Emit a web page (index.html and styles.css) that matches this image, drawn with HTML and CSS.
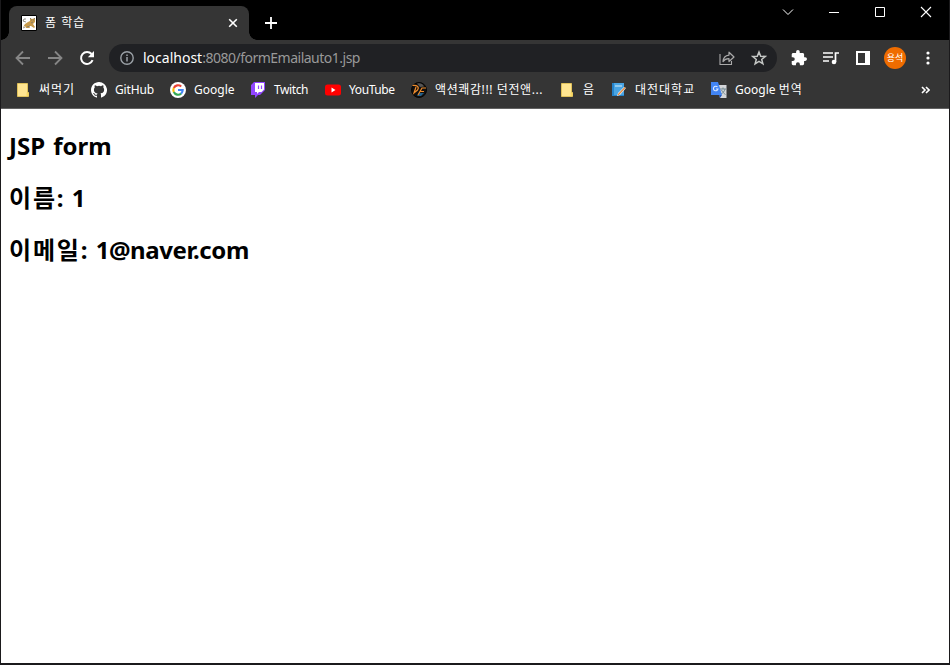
FILE: index.html
```html
<!DOCTYPE html>
<html lang="ko">
<head>
<meta charset="utf-8">
<title>폼 학습</title>
<link rel="stylesheet" href="styles.css">
</head>
<body>
<div class="window">
  <header class="tabstrip">
    <div class="tab">
      <svg class="favicon" width="16" height="16" viewBox="0 0 16 16"><path fill="#fff" stroke="#000" d="M.5.5h15v15H.5z"/><path d="M2 12l2-3 3-2 2-1V3l2 1 3-1v4l-2 2 2 3-1 1-3-2-2 0 1 2H5l-1-2z" fill="#c79a4b"/><path d="M5 7L2 6l1-2 2 0M2 13l2-1M6 12l3-1M10 5h1M12 5h1M10 8l2-1M9 4l1-1M13 4l1-1" fill="none" stroke="#77736b" stroke-width=".8"/></svg>
      <span class="tab-title ko">폼 학습</span>
      <svg class="tab-close" width="10" height="10" viewBox="0 0 10 10"><path d="M1.200 1.200l7.600 7.600M8.800 1.200L1.200 8.800" stroke="#fff" stroke-width="1.600"/></svg>
    </div>
    <svg class="new-tab" width="12" height="12" viewBox="0 0 12 12"><path d="M6 0v12M0 6h12" stroke="#fff" stroke-width="1.800"/></svg>
    <div class="controls">
      <svg width="46" height="24" viewBox="0 0 46 24"><path d="M18 9.500l5 5 5-5" fill="none" stroke="#fff"/></svg>
      <svg width="46" height="24" viewBox="0 0 46 24"><path d="M18 12.500h10" stroke="#fff"/></svg>
      <svg width="46" height="24" viewBox="0 0 46 24"><path d="M18.500 7.500h9v9h-9z" fill="none" stroke="#fff"/></svg>
      <svg width="46" height="24" viewBox="0 0 46 24"><path d="M18 7l10 10M28 7L18 17" stroke="#fff" stroke-width="1.100"/></svg>
    </div>
  </header>
  <nav class="toolbar">
    <svg class="nav" width="16" height="16" viewBox="0 0 16 16"><path d="M15 8H2M8 1.500L1.500 8 8 14.500" fill="none" stroke="#868686" stroke-width="1.800"/></svg>
    <svg class="nav" width="16" height="16" viewBox="0 0 16 16"><path d="M1 8h13M8 1.500L14.500 8 8 14.500" fill="none" stroke="#868686" stroke-width="1.800"/></svg>
    <svg class="nav" width="16" height="16" viewBox="0 0 16 16"><path d="M13.600 10.200A6 6 0 1 1 12.600 4" fill="none" stroke="#fff" stroke-width="2"/><path d="M15 1v6.200H8.800z" fill="#fff"/></svg>
    <div class="omnibox">
      <svg class="info" width="14" height="14" viewBox="0 0 14 14"><circle cx="7" cy="7" r="6.200" fill="none" stroke="#9aa0a6" stroke-width="1.400"/><path d="M7 6v4.500M7 3.500V5" stroke="#9aa0a6" stroke-width="1.500"/></svg>
      <span class="url"><span class="host">localhost</span><span class="path">:8080/formEmailauto1.jsp</span></span>
      <svg class="share" width="16" height="16" viewBox="0 0 16 16"><path d="M1 4v10.500h11.500V11" fill="none" stroke="#aaa" stroke-width="1.100"/><path d="M10 2.200L15 7l-5 4.500V8.700C7.500 8.600 5.500 9.500 4 11.600 4.300 7.700 6.500 5.500 10 5.100z" fill="none" stroke="#aaa" stroke-width="1.200" stroke-linejoin="round"/></svg>
      <svg class="star" width="16" height="16" viewBox="0 0 16 16"><path d="M8 2l1.700 4.200 4.500.3-3.500 2.900 1.200 4.400L8 11.400l-3.900 2.400 1.200-4.400-3.500-2.900 4.500-.3z" fill="none" stroke="#c4c7c5" stroke-width="1.500"/></svg>
    </div>
    <svg class="puzzle" width="16" height="16" viewBox="1 1 22 22"><path fill="#fff" d="M20.500 11H19V7c0-1.100-.9-2-2-2h-4V3.500a2.500 2.500 0 0 0-5 0V5H4c-1.100 0-2 .9-2 2v3.800h1.500a2.700 2.700 0 0 1 0 5.400H2V20c0 1.100.9 2 2 2h3.800v-1.500a2.700 2.700 0 0 1 5.400 0V22H17c1.100 0 2-.9 2-2v-4h1.500a2.500 2.500 0 0 0 0-5z"/></svg>
    <svg class="media" width="16" height="16" viewBox="0 0 16 16"><path d="M0 3h10M0 7h10M0 11h6" stroke="#fff" stroke-width="1.700"/><path d="M12.500 12V3H16" fill="none" stroke="#fff" stroke-width="1.700"/><circle cx="11" cy="12" r="2.300" fill="#fff"/></svg>
    <svg class="panel" width="14" height="14" viewBox="0 0 14 14"><path d="M1 1h12v12H1z" fill="none" stroke="#fff" stroke-width="2"/><path d="M9 0h5v14H9z" fill="#fff"/></svg>
    <span class="avatar">용석</span>
    <svg class="menu" width="4" height="14" viewBox="0 0 4 14"><g fill="#fff"><circle cx="2" cy="2" r="1.600"/><circle cx="2" cy="7" r="1.600"/><circle cx="2" cy="12" r="1.600"/></g></svg>
  </nav>
  <nav class="bookmarks">
    <div class="bookmark"><svg width="16" height="16" viewBox="0 0 16 16"><path d="M2.500 1.500h10v9h1v4h-11z" fill="#ffe591" stroke="#dfc15a"/><path d="M11.500 14v-3.500h2V14z" fill="#f8d865"/></svg><span class="label ko">써먹기</span></div>
    <div class="bookmark"><svg width="16" height="16" viewBox="0 0 16 16"><path fill="#fff" d="M8 0C3.580 0 0 3.580 0 8c0 3.540 2.290 6.530 5.470 7.590.4.070.55-.17.55-.38 0-.19-.01-.82-.01-1.490-2.010.37-2.530-.49-2.690-.94-.09-.23-.48-.94-.82-1.130-.28-.15-.68-.52-.01-.53.630-.01 1.080.58 1.230.82.720 1.210 1.870.87 2.330.66.070-.52.280-.87.510-1.070-1.780-.2-3.640-.89-3.640-3.950 0-.87.310-1.590.82-2.150-.08-.2-.36-1.020.08-2.120 0 0 .67-.21 2.200.82a7.600 7.600 0 0 1 4 0c1.530-1.040 2.200-.82 2.200-.82.440 1.100.16 1.920.08 2.120.51.560.82 1.270.82 2.150 0 3.070-1.870 3.750-3.650 3.950.29.250.54.730.54 1.480 0 1.070-.01 1.930-.01 2.200 0 .21.15.46.55.38A8 8 0 0 0 8 0z"/></svg><span class="label latin">GitHub</span></div>
    <div class="bookmark"><svg width="16" height="16" viewBox="0 0 16 16"><circle cx="8" cy="8" r="8" fill="#fff"/><g fill="none" stroke-width="2.100"><path d="M11.200 4.500A4.700 4.700 0 0 0 3.800 6" stroke="#ea4335"/><path d="M3.800 6a4.700 4.700 0 0 0 0 4" stroke="#fbbc05"/><path d="M3.800 10a4.700 4.700 0 0 0 7.300 1.600" stroke="#34a853"/><path d="M8 8h4.700c0 1.600-.6 2.700-1.600 3.600" stroke="#4285f4"/></g></svg><span class="label">Google</span></div>
    <div class="bookmark"><svg width="16" height="16" viewBox="0 0 16 16"><path d="M4 0h11v8l-5 5H8l-3 3v-3H1V3z" fill="#9146ff"/><path d="M5 1h9v6.500L11.500 10H9l-2 2v-2H5z" fill="#fff"/><path d="M8.500 3.500V7M11.500 3.500V7" stroke="#9146ff" stroke-width="1.200"/></svg><span class="label twitch">Twitch</span></div>
    <div class="bookmark"><svg width="16" height="16" viewBox="0 0 16 16"><rect y="2.500" width="16" height="11" rx="2.500" fill="#f00"/><path d="M6.500 5.500v5l4-2.500z" fill="#fff"/></svg><span class="label youtube">YouTube</span></div>
    <div class="bookmark"><svg width="16" height="16" viewBox="0 0 16 16"><circle cx="8" cy="8" r="7.500" fill="#11100f" stroke="#050505"/><path d="M6 1.500a6 6 0 0 1 7 3L9 5z" fill="#555"/><path d="M6 14l2-3 5 0-3 3z" fill="#245e88"/><path d="M1.500 3.500c5-.5 7 1.500 5 4.500L3 11l2-6M15 6h-4L7 13M8.500 9.500H13" fill="none" stroke="#ee8b2c" stroke-width="1.200"/></svg><span class="label ko action">액션쾌감!!! 던전앤...</span></div>
    <div class="bookmark"><svg width="16" height="16" viewBox="0 0 16 16"><path d="M2.500 1.500h10v9h1v4h-11z" fill="#ffe591" stroke="#dfc15a"/><path d="M11.500 14v-3.500h2V14z" fill="#f8d865"/></svg><span class="label ko">음</span></div>
    <div class="bookmark"><svg width="16" height="16" viewBox="0 0 16 16"><path d="M1 1h12v13H1z" fill="#2582c9"/><path d="M3 1h10v12H3z" fill="#48a4e3"/><path d="M4 3h7v2H4z" fill="#91c9ed"/><path d="M6 14l1-3 6-6 2 1-6 7z" fill="#eee"/><path d="M7 13l7-7.500" stroke="#e48a3e" stroke-width="1.200"/></svg><span class="label ko">대전대학교</span></div>
    <div class="bookmark"><svg width="16" height="16" viewBox="0 0 16 16"><path d="M6 3h9.500v13H9z" fill="#d4d6d9"/><path d="M9 7h6M12 5.500V7M14 7c-.7 2.500-2 4-4 5M10.500 8c1 2 2.500 3.500 4 4.500" fill="none" stroke="#718891"/><path d="M0 0h7l4 13H0z" fill="#4285f4"/><path d="M8 13h3l-2 3z" fill="#2455b8"/><path d="M6.500 5A2.300 2.300 0 1 0 7 7H5" fill="none" stroke="#dceaff" stroke-width="1.100"/></svg><span class="label">Google <span class="ko">번역</span></span></div>
    <svg class="overflow" width="9" height="8" viewBox="0 0 9 8"><path d="M1 1l3 3-3 3M5 1l3 3-3 3" fill="none" stroke="#fff" stroke-width="1.600"/></svg>
  </nav>
  <main class="page">
    <h2 class="form-title">JSP form</h2>
    <h2><span class="hangul">이름</span>: 1</h2>
    <h2><span class="hangul">이메일</span>: <span class="address">1@naver.com</span></h2>
  </main>
</div>
</body>
</html>
```

FILE: styles.css
```css
* { box-sizing: border-box; }
body { margin: 0; overflow: hidden; background: #1b1a1c; font-family: "Noto Sans", "Noto Sans CJK KR", sans-serif; }
svg { display: block; flex: none; }
.window { display: flex; flex-direction: column; height: 665px; padding: 0 1px 2px; }
.tabstrip { display: flex; height: 40px; background: #000; }
.tab { position: relative; display: flex; align-items: center; width: 240px; height: 34px; margin: 6px 0 0 8px; padding: 0 11px 0 12px; border-radius: 8px 8px 0 0; background: #353535; color: #fff; }
.tab::before, .tab::after { content: ""; position: absolute; bottom: 0; width: 8px; height: 8px; }
.tab::before { left: -8px; background: radial-gradient(circle at 0 0, #000 7.5px, #353535 8px); }
.tab::after { right: -8px; background: radial-gradient(circle at 100% 0, #000 7.5px, #353535 8px); }
.tab-title { margin-left: 8px; font-size: 12px; line-height: 16px; }
.tab-close { margin-left: auto; }
.new-tab { margin: 17px 0 0 16px; }
.controls { display: flex; margin-left: auto; }
.toolbar { display: flex; align-items: center; height: 36px; padding-left: 14px; background: #353535; }
.nav { margin-right: 16px; }
.omnibox { display: flex; align-items: center; width: 668px; height: 28px; margin-left: -2px; padding: 0 10px 0 11px; border-radius: 14px; background: #202124; }
.url { margin-left: 9px; color: #999; font-size: 14px; line-height: 20px; white-space: nowrap; }
.host { color: #fff; }
.path { letter-spacing: -.5px; }
.share { margin-left: auto; }
.star { margin-left: 16px; }
.puzzle { margin-left: 14px; }
.media { margin-left: 16px; }
.panel { margin-left: 17px; }
.avatar { display: grid; place-items: center; flex: none; width: 22px; height: 22px; margin-left: 14px; border-radius: 50%; background: #ef6c00; color: #fff; font-size: 9px; line-height: 12px; white-space: nowrap; }
.menu { margin-left: 19.5px; }
.bookmarks { display: grid; grid-template-columns: 76px 79px 80px 75px 86px 148px 52px 100px 210px 9px; align-items: center; height: 33px; padding: 0 0 5px 14px; border-bottom: 1px solid #626262; background: #353535; }
.bookmark { display: flex; align-items: center; gap: 8px; height: 16px; color: #fff; }
.label { font-size: 12px; line-height: 16px; white-space: nowrap; }
.ko { letter-spacing: 1px; }
.action { letter-spacing: .6px; }
.latin { letter-spacing: -.15px; }
.twitch, .youtube { letter-spacing: -.4px; }
.page { flex: 1; padding: 21px 8px; background: #fff; }
.page h2 { margin: 0 0 20px; color: #000; font-size: 24px; font-weight: 700; line-height: 32px; word-spacing: 2px; }
.hangul { letter-spacing: 1.8px; }
.address { letter-spacing: -.4px; }
```
